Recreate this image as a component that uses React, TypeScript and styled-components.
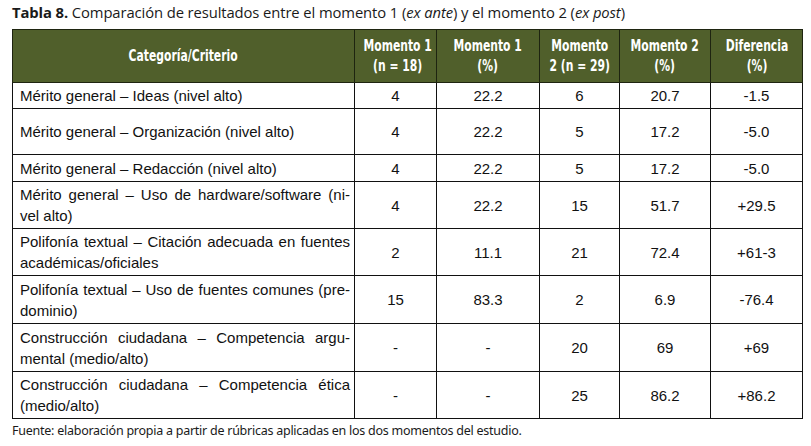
import styled, { createGlobalStyle } from "styled-components";

const GlobalStyle = createGlobalStyle`
  html, body {
    margin: 0;
    padding: 0;
    background: #ffffff;
  }
`;

const Page = styled.div`
  padding: 3px 0 0 12px;
  width: 799px;
`;

const Caption = styled.p`
  margin: 0 0 7px 0;
  font-family: "Open Sans", "Noto Sans", sans-serif;
  font-size: 14.8px;
  line-height: 19px;
  letter-spacing: -0.1px;
  color: #1a1a1a;
  b {
    font-weight: 700;
  }
`;

const Table = styled.table`
  border-collapse: collapse;
  table-layout: fixed;
  width: 791px;
  font-family: "Liberation Sans", Arial, sans-serif;
  font-size: 15px;
  color: #111;
`;

const HeadCell = styled.th`
  background: #505f2b;
  color: #ffffff;
  border: 1px solid #1e2410;
  height: 52px;
  padding: 0;
  text-align: center;
  vertical-align: middle;
  overflow: visible;
`;

const HeadText = styled.span`
  display: inline-block;
  white-space: nowrap;
  font-family: "DejaVu Sans Condensed", "DejaVu Sans", sans-serif;
  font-stretch: condensed;
  font-weight: 700;
  font-size: 15px;
  line-height: 20px;
  transform: scaleX(0.8);
  transform-origin: center;
`;

const Row = styled.tr<{ $h: number }>`
  height: ${(p) => p.$h}px;
`;

const LabelCell = styled.td`
  border: 1px solid #111;
  padding: 1px 4px 1px 7px;
  line-height: 21px;
  vertical-align: middle;
`;

const NumCell = styled.td`
  border: 1px solid #111;
  padding: 0 4px;
  text-align: center;
  vertical-align: middle;
`;

const Line = styled.div<{ $justify?: boolean }>`
  white-space: nowrap;
  text-align: ${(p) => (p.$justify ? "justify" : "left")};
  text-align-last: ${(p) => (p.$justify ? "justify" : "left")};
`;

const Source = styled.p`
  margin: 4px 0 0 0;
  font-family: "Noto Sans", "Open Sans", sans-serif;
  font-size: 12.5px;
  line-height: 16px;
  letter-spacing: -0.25px;
  color: #1a1a1a;
`;

type Item = {
  lines: string[];
  values: string[];
  h: number;
};

const rows: Item[] = [
  { lines: ["Mérito general – Ideas (nivel alto)"], values: ["4", "22.2", "6", "20.7", "-1.5"], h: 26 },
  { lines: ["Mérito general – Organización (nivel alto)"], values: ["4", "22.2", "5", "17.2", "-5.0"], h: 46 },
  { lines: ["Mérito general – Redacción (nivel alto)"], values: ["4", "22.2", "5", "17.2", "-5.0"], h: 27 },
  {
    lines: ["Mérito general – Uso de hardware/software (ni-", "vel alto)"],
    values: ["4", "22.2", "15", "51.7", "+29.5"],
    h: 47,
  },
  {
    lines: ["Polifonía textual – Citación adecuada en fuentes", "académicas/oficiales"],
    values: ["2", "11.1", "21", "72.4", "+61-3"],
    h: 47,
  },
  {
    lines: ["Polifonía textual – Uso de fuentes comunes (pre-", "dominio)"],
    values: ["15", "83.3", "2", "6.9", "-76.4"],
    h: 48,
  },
  {
    lines: ["Construcción ciudadana – Competencia argu-", "mental (medio/alto)"],
    values: ["-", "-", "20", "69", "+69"],
    h: 48,
  },
  {
    lines: ["Construcción ciudadana – Competencia ética", "(medio/alto)"],
    values: ["-", "-", "25", "86.2", "+86.2"],
    h: 47,
  },
];

const heads: string[][] = [
  ["Categoría/Criterio"],
  ["Momento 1", "(n = 18)"],
  ["Momento 1", "(%)"],
  ["Momento", "2 (n = 29)"],
  ["Momento 2", "(%)"],
  ["Diferencia", "(%)"],
];

const widths = [342, 82, 103, 80, 91, 92];

export default function App() {
  return (
    <>
      <GlobalStyle />
      <Page>
        <Caption>
          <b>Tabla 8.</b> Comparación de resultados entre el momento 1 (<i>ex ante</i>) y el
          momento 2 (<i>ex post</i>)
        </Caption>
        <Table>
          <colgroup>
            {widths.map((w, i) => (
              <col key={i} style={{ width: w }} />
            ))}
          </colgroup>
          <thead>
            <tr>
              {heads.map((h, i) => (
                <HeadCell key={i}>
                  <HeadText>
                    {h.map((t, j) => (
                      <div key={j}>{t}</div>
                    ))}
                  </HeadText>
                </HeadCell>
              ))}
            </tr>
          </thead>
          <tbody>
            {rows.map((r, i) => (
              <Row key={i} $h={r.h}>
                <LabelCell>
                  {r.lines.map((l, j) => (
                    <Line key={j} $justify={r.lines.length > 1 && j === 0}>
                      {l}
                    </Line>
                  ))}
                </LabelCell>
                {r.values.map((v, j) => (
                  <NumCell key={j}>{v}</NumCell>
                ))}
              </Row>
            ))}
          </tbody>
        </Table>
        <Source>
          Fuente: elaboración propia a partir de rúbricas aplicadas en los dos momentos del estudio.
        </Source>
      </Page>
    </>
  );
}
